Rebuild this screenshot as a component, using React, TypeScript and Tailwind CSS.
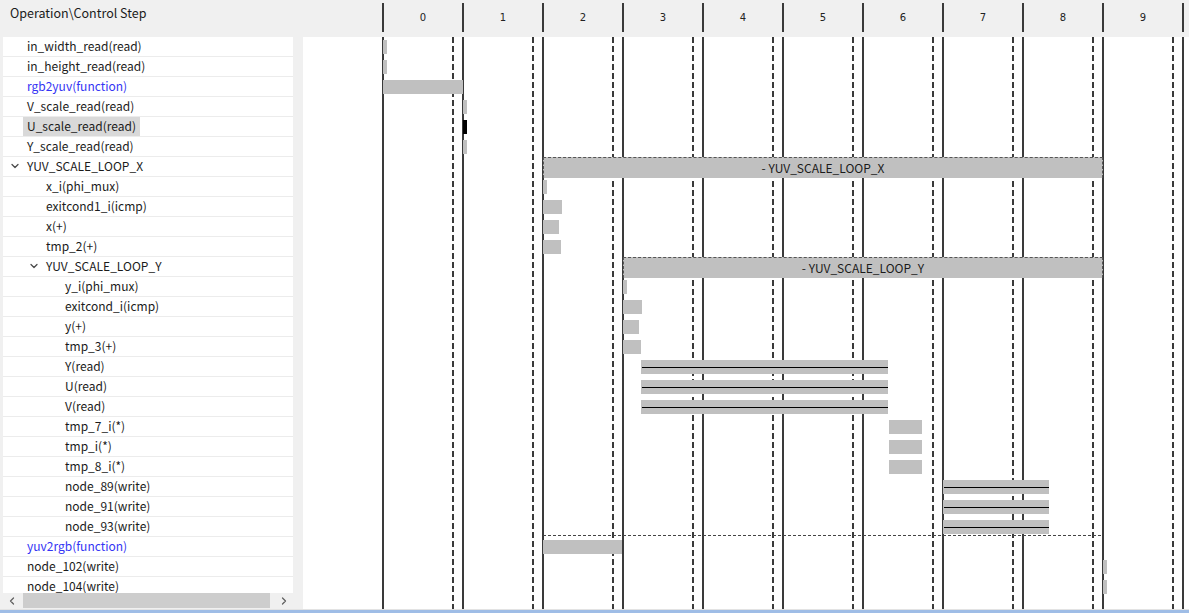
import React from 'react';
import { ChevronDown, ChevronLeft, ChevronRight } from 'lucide-react';

type Row = {
    label: string;
    level: number;
    group?: boolean;
    fn?: boolean;
    selected?: boolean;
};

type Bar = {
    x0: number;
    x1: number;
    kind?: 'plain' | 'selected' | 'line' | 'loop';
    title?: string;
};

const rows: Row[] = [
    { label: 'in_width_read(read)', level: 0 },
    { label: 'in_height_read(read)', level: 0 },
    { label: 'rgb2yuv(function)', level: 0, fn: true },
    { label: 'V_scale_read(read)', level: 0 },
    { label: 'U_scale_read(read)', level: 0, selected: true },
    { label: 'Y_scale_read(read)', level: 0 },
    { label: 'YUV_SCALE_LOOP_X', level: 0, group: true },
    { label: 'x_i(phi_mux)', level: 1 },
    { label: 'exitcond1_i(icmp)', level: 1 },
    { label: 'x(+)', level: 1 },
    { label: 'tmp_2(+)', level: 1 },
    { label: 'YUV_SCALE_LOOP_Y', level: 1, group: true },
    { label: 'y_i(phi_mux)', level: 2 },
    { label: 'exitcond_i(icmp)', level: 2 },
    { label: 'y(+)', level: 2 },
    { label: 'tmp_3(+)', level: 2 },
    { label: 'Y(read)', level: 2 },
    { label: 'U(read)', level: 2 },
    { label: 'V(read)', level: 2 },
    { label: 'tmp_7_i(*)', level: 2 },
    { label: 'tmp_i(*)', level: 2 },
    { label: 'tmp_8_i(*)', level: 2 },
    { label: 'node_89(write)', level: 2 },
    { label: 'node_91(write)', level: 2 },
    { label: 'node_93(write)', level: 2 },
    { label: 'yuv2rgb(function)', level: 0, fn: true },
    { label: 'node_102(write)', level: 0 },
    { label: 'node_104(write)', level: 0 },
];

// page x coordinates of each operation's bar
const bars: Bar[] = [
    { x0: 383, x1: 387 },
    { x0: 383, x1: 387 },
    { x0: 383, x1: 463 },
    { x0: 463, x1: 467 },
    { x0: 463, x1: 467, kind: 'selected' },
    { x0: 463, x1: 467 },
    { x0: 543, x1: 1103, kind: 'loop', title: '- YUV_SCALE_LOOP_X' },
    { x0: 543, x1: 547 },
    { x0: 543, x1: 562 },
    { x0: 543, x1: 559 },
    { x0: 543, x1: 561 },
    { x0: 623, x1: 1103, kind: 'loop', title: '- YUV_SCALE_LOOP_Y' },
    { x0: 623, x1: 627 },
    { x0: 623, x1: 642 },
    { x0: 623, x1: 639 },
    { x0: 623, x1: 641 },
    { x0: 641, x1: 888, kind: 'line' },
    { x0: 641, x1: 888, kind: 'line' },
    { x0: 641, x1: 888, kind: 'line' },
    { x0: 889, x1: 922 },
    { x0: 889, x1: 922 },
    { x0: 889, x1: 922 },
    { x0: 943, x1: 1049, kind: 'line' },
    { x0: 943, x1: 1049, kind: 'line' },
    { x0: 943, x1: 1049, kind: 'line' },
    { x0: 543, x1: 622 },
    { x0: 1103, x1: 1107 },
    { x0: 1103, x1: 1107 },
];

const CHART_X = 303;
const steps = [0, 1, 2, 3, 4, 5, 6, 7, 8, 9];

const TreeRow: React.FC<{ row: Row }> = ({ row }) => {
    const pad = row.level === 0 ? 'pl-[24px]' : row.level === 1 ? 'pl-[43px]' : 'pl-[62px]';
    return (
        <div className={`relative h-[20px] shrink-0 border-b border-[#ececec] flex items-center ${pad}`}>
            {row.group && (
                <ChevronDown
                    size={12}
                    strokeWidth={2.5}
                    className={`absolute top-[3px] text-[#4a4a4a] ${row.level === 0 ? 'left-[6px]' : 'left-[25px]'}`}
                />
            )}
            <span
                className={`h-[19px] pb-px flex items-center whitespace-nowrap ${
                    row.selected ? 'bg-[#d9d9d9] -ml-[4px] px-[4px]' : ''
                } ${row.fn ? 'text-[#3434f4]' : 'text-[#1b1b1b]'}`}
            >
                {row.label}
            </span>
        </div>
    );
};

const ChartRow: React.FC<{ bar: Bar }> = ({ bar }) => {
    const style = { marginLeft: bar.x0 - CHART_X, width: bar.x1 - bar.x0 };
    if (bar.kind === 'loop') {
        return (
            <div className="relative h-[20px] shrink-0 flex items-start">
                <div
                    className="h-[21px] bg-[#c0c0c0] border-t border-l border-r border-dashed border-[#555] flex items-center justify-center text-[12px] text-[#1b1b1b]"
                    style={style}
                >
                    {bar.title}
                </div>
            </div>
        );
    }
    if (bar.kind === 'line') {
        return (
            <div className="relative h-[20px] shrink-0 flex items-start">
                <div className="mt-[3px] h-[14px] bg-[#c0c0c0] flex items-center pl-px" style={style}>
                    <div className="h-px w-full bg-black" />
                </div>
            </div>
        );
    }
    return (
        <div className="relative h-[20px] shrink-0 flex items-start">
            <div
                className={`mt-[3px] h-[14px] ${bar.kind === 'selected' ? 'bg-black' : 'bg-[#c0c0c0]'}`}
                style={style}
            />
        </div>
    );
};

const GridLines: React.FC = () => (
    <svg className="absolute inset-0 pointer-events-none" width="886" height="572">
        {Array.from({ length: 11 }, (_, k) => (
            <line key={`s${k}`} x1={80 + 80 * k} y1={0} x2={80 + 80 * k} y2={572} stroke="#3a3a3a" strokeWidth={2} />
        ))}
        {Array.from({ length: 10 }, (_, k) => (
            <line
                key={`d${k}`}
                x1={150 + 80 * k}
                y1={0}
                x2={150 + 80 * k}
                y2={572}
                stroke="#3a3a3a"
                strokeWidth={2}
                strokeDasharray="6 3"
            />
        ))}
        <line x1={240} y1={498.5} x2={800} y2={498.5} stroke="#444" strokeWidth={1} strokeDasharray="3 2" />
    </svg>
);

const App: React.FC = () => {
    return (
        <div className="w-[1189px] h-[613px] bg-[#f0f0f0] flex flex-col overflow-hidden font-['Noto_Sans_CJK_SC','Noto_Sans',sans-serif] text-[12px] leading-none">
            {/* header */}
            <div className="h-[37px] shrink-0 flex">
                <div className="w-[382px] pl-[10px] pt-[7px] text-[12.5px] text-[#1b1b1b]">Operation\Control Step</div>
                {steps.map((s) => (
                    <div
                        key={s}
                        className={`mt-[3px] h-[29px] border-l-2 border-[#3a3a3a] flex items-center justify-center text-[10px] text-[#222] font-['DejaVu_Sans',sans-serif] ${
                            s === 9 ? 'w-[82px] border-r-2' : 'w-[80px]'
                        }`}
                    >
                        {s}
                    </div>
                ))}
            </div>

            {/* body */}
            <div className="h-[572px] shrink-0 flex">
                <div className="ml-[3px] w-[290px] flex flex-col">
                    <div className="h-[556px] bg-white flex flex-col overflow-hidden">
                        {rows.map((r) => (
                            <TreeRow key={r.label} row={r} />
                        ))}
                    </div>
                    <div className="h-[15px] bg-[#f0f0f0] flex items-center">
                        <ChevronLeft size={12} strokeWidth={2.5} className="ml-[3px] text-[#606060]" />
                        <div className="ml-[5px] w-[247px] h-[15px] bg-[#cdcdcd]" />
                        <div className="flex-1" />
                        <ChevronRight size={12} strokeWidth={2.5} className="mr-[3px] text-[#606060]" />
                    </div>
                </div>
                <div className="ml-[10px] flex-1 bg-white relative overflow-hidden">
                    <GridLines />
                    <div className="relative flex flex-col">
                        {bars.map((b, i) => (
                            <ChartRow key={i} bar={b} />
                        ))}
                    </div>
                </div>
            </div>

            <div className="h-px shrink-0 bg-[#e3e3e3]" />
            <div className="h-[3px] shrink-0 bg-[#9fbde6]" />
        </div>
    );
};

export default App;
